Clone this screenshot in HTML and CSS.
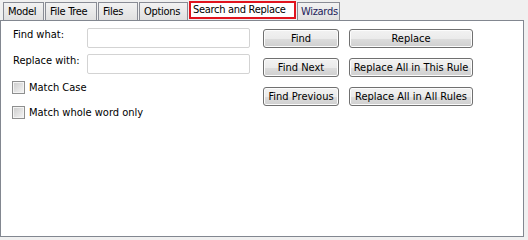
FILE: index.html
```html
<!DOCTYPE html>
<html lang="en">
<head>
    <meta charset="UTF-8">
    <title>Search and Replace</title>
    <link rel="stylesheet" href="styles.css">
</head>
<body>
    <div class="tabs">
        <div class="tab t-model">Model</div>
        <div class="tab t-tree">File Tree</div>
        <div class="tab t-files">Files</div>
        <div class="tab t-options">Options</div>
        <div class="tab active">Search and Replace</div>
        <div class="tab t-wizards">Wizards</div>
    </div>
    <div class="panel">
        <div class="form">
            <div class="row">
                <label class="label">Find what:</label>
                <div class="field"></div>
            </div>
            <div class="row">
                <label class="label">Replace with:</label>
                <div class="field"></div>
            </div>
            <div class="check-row first">
                <span class="check"></span> Match Case
            </div>
            <div class="check-row">
                <span class="check"></span> Match whole word only
            </div>
        </div>
        <div class="buttons">
            <div class="btn">Find</div>
            <div class="btn">Replace</div>
            <div class="btn">Find Next</div>
            <div class="btn">Replace All in This Rule</div>
            <div class="btn">Find Previous</div>
            <div class="btn">Replace All in All Rules</div>
        </div>
    </div>
</body>
</html>
```

FILE: styles.css
```css
body {
    margin: 0;
    padding: 0;
    width: 528px;
    height: 240px;
    background-color: #f0f0f0;
    font-family: "DejaVu Sans Condensed", "DejaVu Sans", sans-serif;
    font-stretch: condensed;
    font-size: 11px;
    color: #000;
    overflow: hidden;
}

.tabs {
    display: flex;
    align-items: flex-end;
    height: 20px;
    padding-left: 3px;
}

.tab {
    box-sizing: border-box;
    height: 18px;
    line-height: 17px;
    padding: 0 0 0 4px;
    margin-right: 1px;
    border: 1px solid #898c95;
    border-bottom: none;
    background: linear-gradient(#f2f2f2, #e0e0e0);
    letter-spacing: -0.3px;
    white-space: nowrap;
    overflow: hidden;
}

.t-model { width: 41px; }
.t-tree { width: 52px; }
.t-files { width: 40px; }
.t-options { width: 49px; }

.t-wizards {
    width: 43px;
    padding-left: 3px;
    color: #1c1c5a;
}

.tab.active {
    width: 107px;
    height: 18px;
    line-height: 14px;
    margin-bottom: 1px;
    padding: 0 0 0 2px;
    border: 2px solid #e0141e;
    background: #fff;
}

.panel {
    display: flex;
    width: 511px;
    height: 208px;
    padding: 7px 0 0 11px;
    background: #fff;
    border: 1px solid #828790;
}

.form {
    width: 238px;
}

.row {
    display: flex;
    align-items: center;
    justify-content: space-between;
    height: 20px;
    margin-bottom: 6px;
}

.label {
    padding-left: 1px;
    align-self: flex-start;
    line-height: 14px;
}

.field {
    width: 161px;
    height: 18px;
    border: 1px solid #d3d3d3;
    border-radius: 2px;
    background: #fff;
}

.check-row {
    display: flex;
    align-items: center;
    gap: 4px;
    height: 13px;
    margin-bottom: 12px;
}

.check-row.first {
    margin-top: 7px;
}

.check {
    display: inline-block;
    width: 9px;
    height: 9px;
    border: 1px solid #8e8f8f;
    box-shadow: inset 0 0 0 1px #f4f4f4;
    padding: 1px;
    background: linear-gradient(135deg, #cbcbcb, #f6f6f6);
}

.buttons {
    display: grid;
    grid-template-columns: 76px 124px;
    grid-auto-rows: 19px;
    column-gap: 10px;
    row-gap: 10px;
    margin-left: 13px;
    margin-top: 1px;
}

.btn {
    box-sizing: border-box;
    border: 1px solid #707070;
    border-radius: 3px;
    background: linear-gradient(#f2f2f2 0%, #ebebeb 50%, #dddddd 51%, #cfcfcf 100%);
    box-shadow: inset 0 0 0 1px #fcfcfc;
    text-align: center;
    line-height: 17px;
    white-space: nowrap;
}
```
